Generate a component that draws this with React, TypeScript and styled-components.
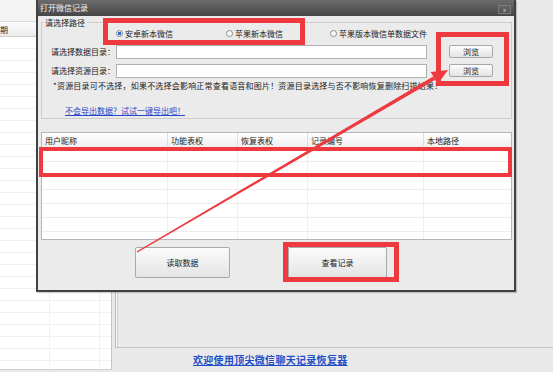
import React from "react";
import styled, { createGlobalStyle } from "styled-components";

const GlobalStyle = createGlobalStyle`
  html, body {
    margin: 0;
    padding: 0;
  }
  body {
    font-family: "Noto Sans CJK SC", "Noto Sans", sans-serif;
  }
`;

const Screen = styled.div`
  position: relative;
  width: 553px;
  height: 372px;
  overflow: hidden;
  background: #e9e9e9;
  display: flex;
  align-items: flex-start;
`;

/* ---------- app behind the dialog ---------- */

const SideList = styled.div`
  width: 111px;
  height: 369px;
  display: flex;
  flex-direction: column;
  border-right: 1px solid #c6c6c6;
  border-bottom: 1px solid #d0d0d0;
  background: #fff;
`;

const SideTop = styled.div`
  height: 22px;
  box-sizing: border-box;
  background: #f3f3f3;
  border-bottom: 1px solid #dadada;
`;

const SideHeader = styled.div`
  height: 15px;
  box-sizing: border-box;
  background: linear-gradient(#fcfcfc, #ebebeb);
  border-bottom: 1px solid #cdcdcd;
  font-size: 8px;
  line-height: 16px;
  color: #222;
`;

const SideRows = styled.div`
  flex: 1;
  background:
    linear-gradient(
      to right,
      transparent 49px,
      #f1f1f1 49px 50px,
      transparent 50px 99px,
      #f1f1f1 99px 100px,
      transparent 100px
    ),
    repeating-linear-gradient(to bottom, #fff 0 11px, #f0f0f0 11px 12px);
`;

const Main = styled.div`
  flex: 1;
  height: 372px;
  display: flex;
  flex-direction: column;
  padding-left: 3px;
`;

const Panel = styled.div`
  height: 348px;
  box-sizing: border-box;
  border-left: 1px solid #bcbcbc;
  border-bottom: 1px solid #c6c6c6;
  box-shadow: inset 1px 0 0 #f7f7f7, inset 2px 0 0 #d4d4d4;
`;

const Footer = styled.div`
  flex: 1;
  display: flex;
  align-items: center;
  padding-left: 78px;
`;

const FooterLink = styled.span`
  font-size: 10px;
  font-weight: bold;
  letter-spacing: 0.3px;
  color: #1f4fc6;
  text-decoration: underline;
  line-height: 14px;
  margin-top: -1px;
`;

/* ---------- dialog ---------- */

const Dialog = styled.div`
  position: absolute;
  left: 36px;
  top: 0;
  width: 480px;
  height: 292px;
  box-sizing: border-box;
  border: 2px solid #414141;
  border-top: none;
  background: #ebebeb;
  display: flex;
  flex-direction: column;
  box-shadow: 1px 1px 1px rgba(0, 0, 0, 0.18);
`;

const TitleBar = styled.div`
  height: 16px;
  flex: none;
  display: flex;
  align-items: center;
  justify-content: space-between;
  padding: 0 3px 0 2px;
  background: linear-gradient(#6b6b6b, #464646);
  color: #f2f2f2;
  font-size: 8px;
  line-height: 10px;
`;

const CloseButton = styled.span`
  width: 13px;
  height: 9px;
  margin-top: 3px;
  box-sizing: border-box;
  border: 1px solid #7c7c7c;
  background: linear-gradient(#666, #515151);
  color: #cfcfcf;
  font-family: "DejaVu Sans", sans-serif;
  font-size: 6px;
  line-height: 7px;
  text-align: center;
`;

const Body = styled.div`
  flex: 1;
  display: flex;
  flex-direction: column;
  padding: 1px 2px 0 3px;
`;

const GroupBox = styled.fieldset`
  margin: 0;
  padding: 0;
  height: 102px;
  box-sizing: border-box;
  border: 1px solid #cccccc;
  min-width: 0;
`;

const GroupTitle = styled.legend`
  margin-left: 1px;
  padding: 0 2px;
  font-size: 8px;
  line-height: 11px;
  color: #222;
`;

const RadioRow = styled.div`
  display: flex;
  align-items: center;
  height: 11px;
  padding-left: 74px;
`;

const RadioItem = styled.label<{ $width?: number }>`
  display: flex;
  align-items: center;
  gap: 2px;
  width: ${(p) => (p.$width ? `${p.$width}px` : "auto")};
  font-size: 8px;
  line-height: 11px;
  color: #222;
`;

const RadioDot = styled.span<{ $checked?: boolean }>`
  width: 7px;
  height: 7px;
  box-sizing: border-box;
  border-radius: 50%;
  border: 1px solid #8e8e8e;
  background: ${(p) =>
    p.$checked
      ? "radial-gradient(circle, #2b6fd6 0 1.6px, #dfe8f5 2px)"
      : "linear-gradient(#f4f4f4, #ffffff)"};
`;

const FieldRow = styled.div<{ $top: number }>`
  display: flex;
  align-items: center;
  height: 15px;
  margin-top: ${(p) => p.$top}px;
  padding-left: 9px;
`;

const FieldLabel = styled.span`
  width: 65px;
  font-size: 8px;
  line-height: 11px;
  color: #222;
  white-space: nowrap;
`;

const PathInput = styled.div`
  width: 311px;
  height: 14px;
  box-sizing: border-box;
  border: 1px solid #b1b1b1;
  background: #fff;
`;

const BrowseButton = styled.div`
  width: 44px;
  height: 13px;
  margin-left: 22px;
  box-sizing: border-box;
  border: 1px solid #a7a7a7;
  border-radius: 2px;
  background: linear-gradient(#fdfdfd, #e3e3e3);
  font-size: 8px;
  line-height: 11px;
  text-align: center;
  color: #222;
`;

const Note = styled.div`
  margin-top: 3px;
  padding-left: 11px;
  font-size: 8px;
  line-height: 10px;
  letter-spacing: 0.2px;
  color: #222;
  white-space: nowrap;
`;

const HelpLink = styled.div`
  margin-top: 15px;
  padding-left: 23px;
  font-size: 8px;
  line-height: 10px;
  color: #2546c9;
  text-decoration: underline;
`;

const Table = styled.div`
  margin-top: 13px;
  height: 108px;
  box-sizing: border-box;
  border: 1px solid #b6b6b6;
  background: #fff;
  overflow: hidden;
`;

const columns = "126px 70px 70px 116px 1fr";

const HeaderRow = styled.div`
  display: grid;
  grid-template-columns: ${columns};
  height: 15px;
  box-sizing: border-box;
  background: linear-gradient(#ffffff, #eeeeee);
  border-bottom: 1px solid #d9d9d9;
`;

const HeaderCell = styled.div`
  padding-left: 3px;
  border-right: 1px solid #dedede;
  font-size: 8px;
  line-height: 15px;
  color: #222;
  white-space: nowrap;
  &:last-child {
    border-right: none;
  }
`;

const Row = styled.div`
  display: grid;
  grid-template-columns: ${columns};
  height: 14px;
  box-sizing: border-box;
  border-bottom: 1px solid #eeeeee;
`;

const Cell = styled.div`
  border-right: 1px solid #efefef;
  &:last-child {
    border-right: none;
  }
`;

const ButtonRow = styled.div`
  display: flex;
  gap: 58px;
  margin-top: 7px;
  padding-left: 94px;
`;

const ActionButton = styled.div<{ $width: number }>`
  width: ${(p) => p.$width}px;
  height: 31px;
  box-sizing: border-box;
  border: 1px solid #a9a9a9;
  border-radius: 2px;
  background: linear-gradient(#fbfbfb, #e4e4e4);
  display: flex;
  align-items: center;
  justify-content: center;
  font-size: 8px;
  color: #222;
`;

/* ---------- red annotations ---------- */

const Mark = styled.div<{ $x: number; $y: number; $w: number; $h: number; $b: number }>`
  position: absolute;
  left: ${(p) => p.$x}px;
  top: ${(p) => p.$y}px;
  width: ${(p) => p.$w}px;
  height: ${(p) => p.$h}px;
  box-sizing: border-box;
  border: ${(p) => p.$b}px solid #ee3a3f;
  pointer-events: none;
`;

const ArrowLayer = styled.svg`
  position: absolute;
  left: 0;
  top: 0;
  pointer-events: none;
`;

const headers = ["用户昵称", "功能表权", "恢复表权", "记录编号", "本地路径"];

export default function App() {
  return (
    <>
      <GlobalStyle />
      <Screen>
        <SideList>
          <SideTop />
          <SideHeader>期</SideHeader>
          <SideRows />
        </SideList>
        <Main>
          <Panel />
          <Footer>
            <FooterLink>欢迎使用顶尖微信聊天记录恢复器</FooterLink>
          </Footer>
        </Main>

        <Dialog>
          <TitleBar>
            <span>打开微信记录</span>
            <CloseButton>x</CloseButton>
          </TitleBar>
          <Body>
            <GroupBox>
              <GroupTitle>请选择路径</GroupTitle>
              <RadioRow>
                <RadioItem $width={110}>
                  <RadioDot $checked />
                  安卓新本微信
                </RadioItem>
                <RadioItem $width={104}>
                  <RadioDot />
                  苹果新本微信
                </RadioItem>
                <RadioItem>
                  <RadioDot />
                  苹果版本微信单数据文件
                </RadioItem>
              </RadioRow>
              <FieldRow $top={5}>
                <FieldLabel>请选择数据目录：</FieldLabel>
                <PathInput />
                <BrowseButton>浏览</BrowseButton>
              </FieldRow>
              <FieldRow $top={4}>
                <FieldLabel>请选择资源目录：</FieldLabel>
                <PathInput />
                <BrowseButton>浏览</BrowseButton>
              </FieldRow>
              <Note>
                *资源目录可不选择，如果不选择会影响正常查看语音和图片！资源目录选择与否不影响恢复删除扫描结果！
              </Note>
              <HelpLink>不会导出数据？试试一键导出吧！</HelpLink>
            </GroupBox>

            <Table>
              <HeaderRow>
                {headers.map((h) => (
                  <HeaderCell key={h}>{h}</HeaderCell>
                ))}
              </HeaderRow>
              {Array.from({ length: 7 }).map((_, i) => (
                <Row key={i}>
                  {headers.map((h) => (
                    <Cell key={h} />
                  ))}
                </Row>
              ))}
            </Table>

            <ButtonRow>
              <ActionButton $width={95}>读取数据</ActionButton>
              <ActionButton $width={99}>查看记录</ActionButton>
            </ButtonRow>
          </Body>
        </Dialog>

        <Mark $x={103} $y={18} $w={202} $h={27} $b={5} />
        <Mark $x={436} $y={32} $w={73} $h={54} $b={5} />
        <Mark $x={39} $y={147} $w={473} $h={30} $b={4} />
        <Mark $x={283} $y={242} $w={116} $h={40} $b={5} />

        <ArrowLayer width="553" height="372" viewBox="0 0 553 372">
          <polygon points="136.6,251.4 137.4,252.6 435.2,79.8 433.2,76.4" fill="#ee3a3f" />
          <polygon points="448,70 437.7,84.2 430.7,72.1" fill="#ee3a3f" />
        </ArrowLayer>
      </Screen>
    </>
  );
}
